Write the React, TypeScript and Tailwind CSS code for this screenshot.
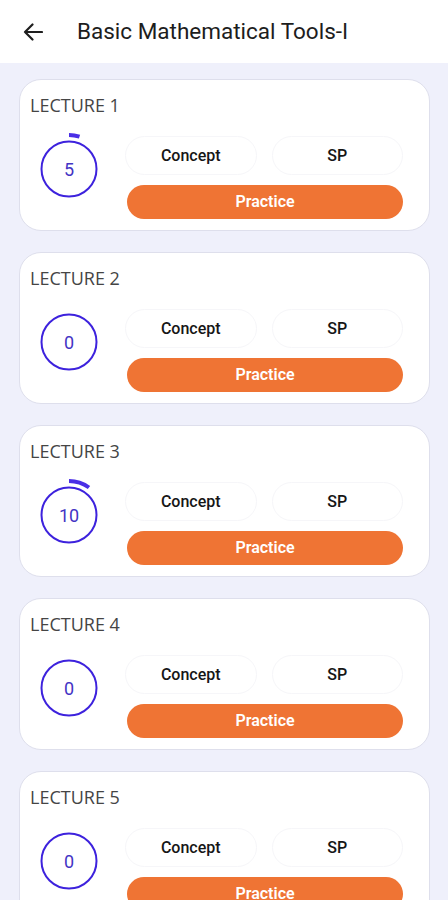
import React from 'react';

type Lecture = { id: number; count: number };

const lectures: Lecture[] = [
  { id: 1, count: 5 },
  { id: 2, count: 0 },
  { id: 3, count: 10 },
  { id: 4, count: 0 },
  { id: 5, count: 0 },
];

function ProgressRing({ value }: { value: number }) {
  // arc sits outside the ring, value is a percent
  const cx = 37;
  const cy = 37;
  const r = 34;
  const angle = (Math.min(value, 99.9) / 100) * 2 * Math.PI;
  const x = cx + r * Math.sin(angle);
  const y = cy - r * Math.cos(angle);
  const large = angle > Math.PI ? 1 : 0;
  return (
    <div className="relative w-[74px] h-[74px] shrink-0">
      <svg width="74" height="74" viewBox="0 0 74 74" className="absolute inset-0">
        <circle cx={cx} cy={cy} r="27.5" fill="none" stroke="#3d22dd" strokeWidth="2" />
        {value > 0 && (
          <path
            d={`M ${cx} ${cy - r} A ${r} ${r} 0 ${large} 1 ${x} ${y}`}
            fill="none"
            stroke="#4a2ee6"
            strokeWidth="4"
          />
        )}
      </svg>
      <div className="absolute inset-0 flex items-center justify-center text-[18px] text-[#4334c4] font-['Roboto',sans-serif]">
        {value}
      </div>
    </div>
  );
}

function LectureCard({ lecture }: { lecture: Lecture }) {
  return (
    <div className="h-[152px] bg-white rounded-[22px] border border-[#dedfec] pl-[10px] pr-[26px] pt-[13px]">
      <div className="text-[18px] leading-6 text-[#454545] font-['Open_Sans',sans-serif]">
        LECTURE {lecture.id}
      </div>
      <div className="flex items-start mt-[18px]">
        <div className="ml-[2px] mt-[-3px] w-[93px]">
          <ProgressRing value={lecture.count} />
        </div>
        <div className="flex-1 flex flex-col mt-[1px]">
          <div className="flex gap-[15px]">
            <button className="flex-1 h-[39px] rounded-full bg-white border border-[#f6f6f9] text-[16px] font-medium text-[#161616]">
              Concept
            </button>
            <button className="flex-1 h-[39px] rounded-full bg-white border border-[#f6f6f9] text-[16px] font-medium text-[#161616]">
              SP
            </button>
          </div>
          <button className="mt-[10px] ml-[2px] h-[34px] rounded-full bg-[#ef7434] text-white text-[16px] font-semibold">
            Practice
          </button>
        </div>
      </div>
    </div>
  );
}

export default function App() {
  return (
    <div className="w-[448px] h-[900px] overflow-hidden bg-[#eff0fb] font-['Roboto',sans-serif]">
      <header className="h-[63px] bg-white flex items-center">
        <svg width="20" height="18" viewBox="0 0 20 18" className="ml-[23px]">
          <path d="M19 9H2M9.5 1.5 2 9l7.5 7.5" fill="none" stroke="#1f1f1f" strokeWidth="2.2" strokeLinecap="round" strokeLinejoin="round" />
        </svg>
        <h1 className="ml-[34px] text-[22.5px] text-[#1d1d1d]">Basic Mathematical Tools-I</h1>
      </header>
      <div className="flex flex-col gap-[21px] pt-[16px] pl-[19px] pr-[18px]">
        {lectures.map((l) => (
          <LectureCard key={l.id} lecture={l} />
        ))}
      </div>
    </div>
  );
}
